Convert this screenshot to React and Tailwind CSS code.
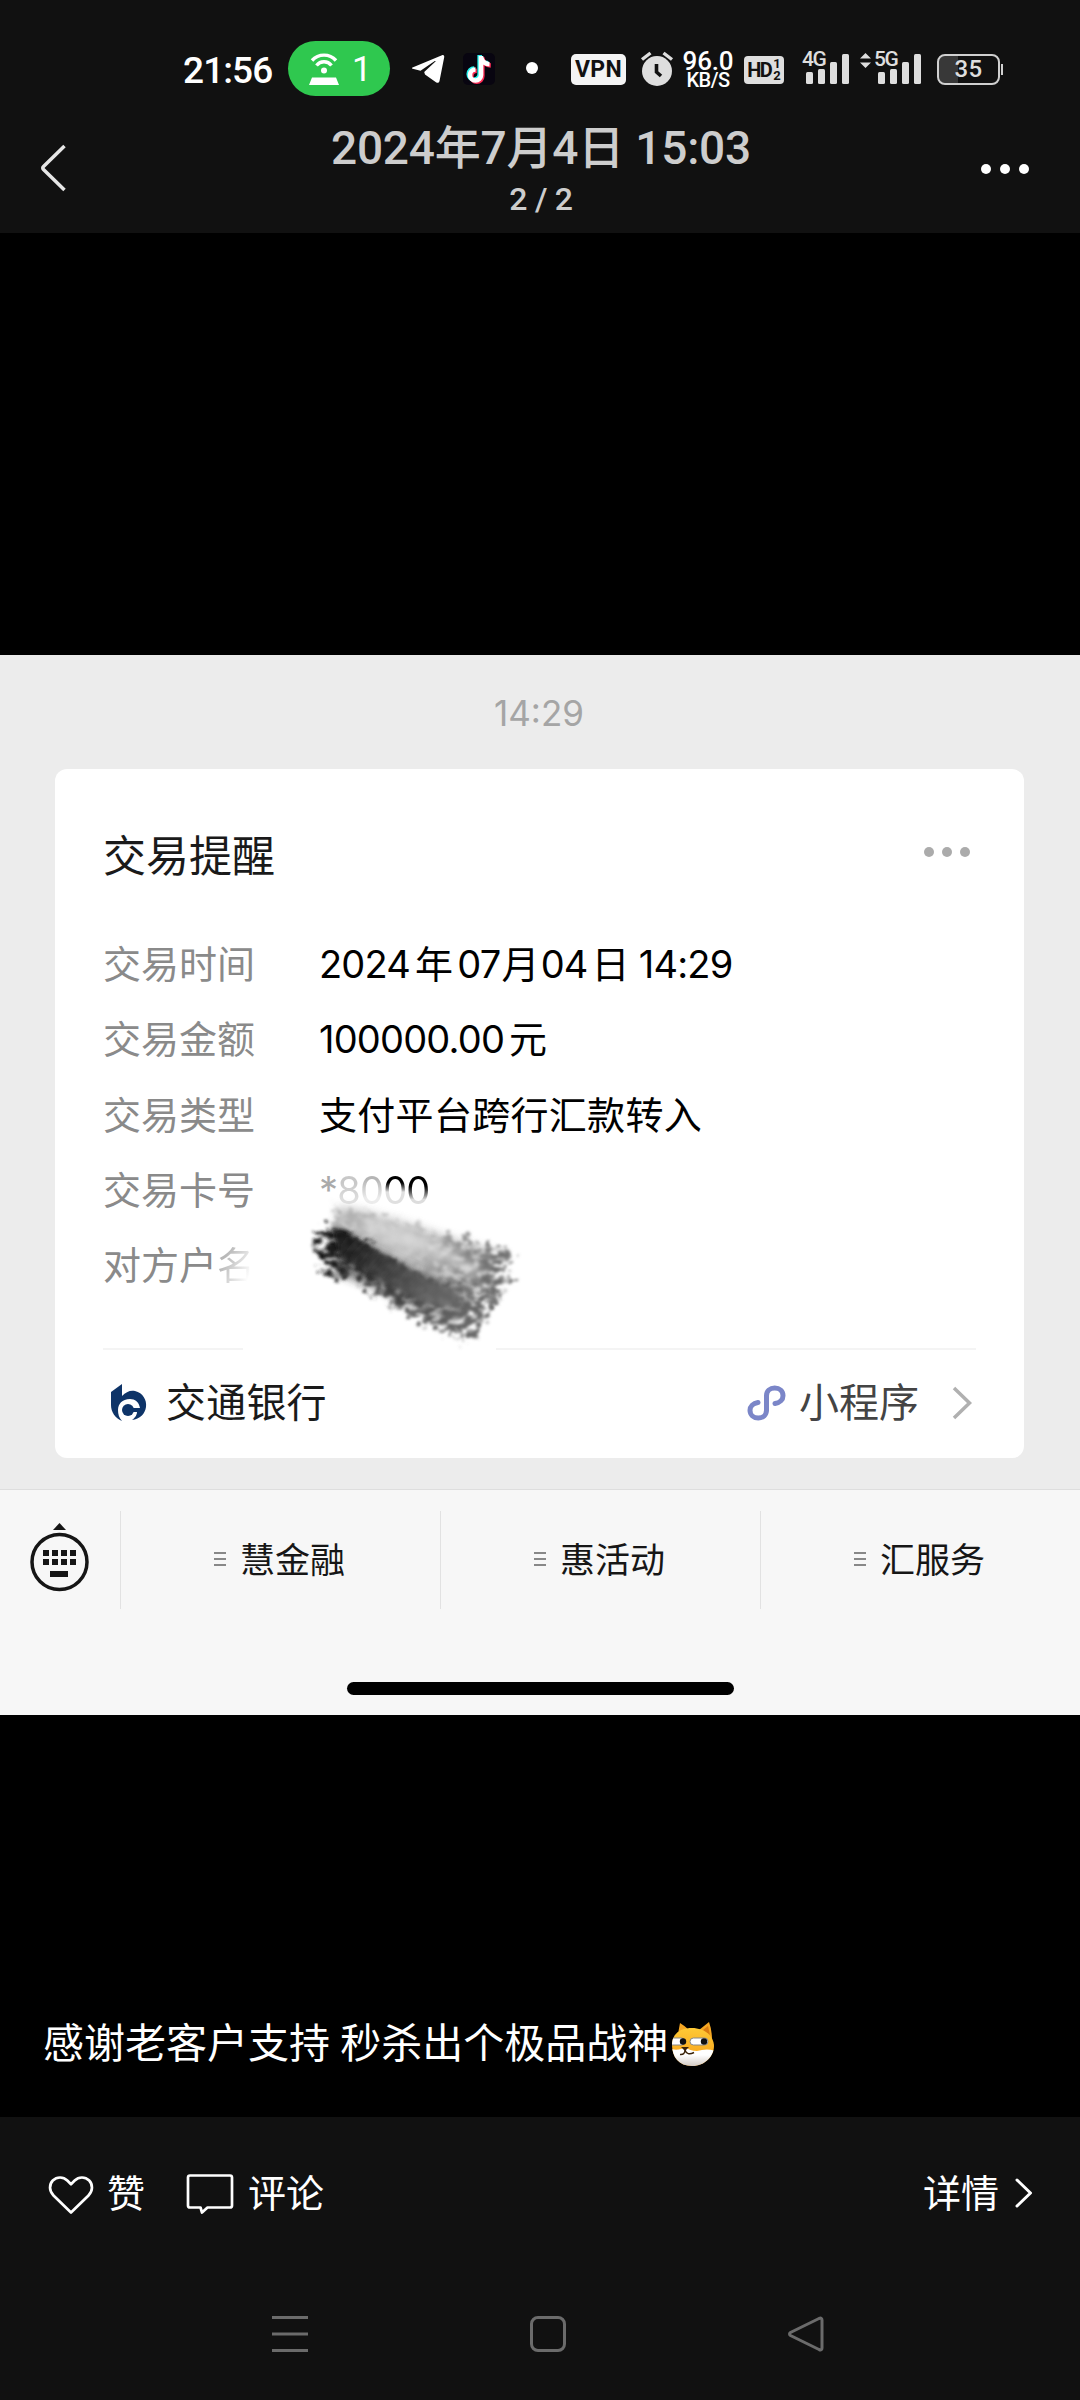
const rows = [
  { label: "交易时间", parts: ["2024", "年", "07", "月", "04", "日", "14:29"] },
  { label: "交易金额", parts: ["100000.00", "元"] },
];

const partGaps = ["", "ml-[5px]", "ml-[5px]", "ml-[1px]", "ml-[2px]", "ml-[4px]", "ml-[10px]"];

const menus = ["慧金融", "惠活动", "汇服务"];

const SignalBars = () => (
  <svg width="44" height="30" viewBox="0 0 44 30" fill="#dedede">
    <rect x="0" y="18" width="7" height="12" rx="1.5" />
    <rect x="12" y="15" width="7" height="15" rx="1.5" />
    <rect x="24" y="8" width="7" height="22" rx="1.5" />
    <rect x="36" y="0" width="7" height="30" rx="1.5" />
  </svg>
);

const StatusBar = () => (
  <div className="flex h-[136px] items-center pl-[183px] text-white">
    <span className="mt-[4px] w-[105px] text-[37px] leading-none font-medium tracking-[-0.9px]">21:56</span>

    {/* Hotspot pill */}
    <div className="mt-[1px] flex h-[55px] w-[102px] items-center rounded-full bg-[#2fc84f] pl-[20px]">
      <svg width="32" height="32" viewBox="0 0 32 32" fill="none" stroke="#fff" strokeWidth="3.4">
        <path d="M4 7.5C10.500 .3 21.500 .3 28 7.500" />
        <path d="M8.500 12.500C12.500 7.500 19.500 7.500 23.500 12.500" />
        <circle cx="16" cy="17.500" r="3" fill="#fff" stroke="none" />
        <path d="M4 24.500h24l3 7.500H1z" fill="#fff" stroke="none" />
      </svg>
      <span className="mt-[2px] ml-[12px] text-[35px] leading-none">1</span>
    </div>

    <svg className="ml-[21px] mt-[2px]" width="34" height="30" viewBox="0 0 34 30" fill="#fff">
      <path d="M1.500 13.500 31 1.200c1.500-.5 2.500.3 2.200 2L28.500 27c-.4 1.800-1.600 2.300-3.200 1.400L14 20.500l-.8-2.500L24.500 7.500c.4-.5 0-.8-.7-.4L9.500 16.800 1.700 14.700c-1-.3-1-.8-.2-1.200z" />
    </svg>

    <svg className="ml-[18px] mt-[1px]" width="32" height="32" viewBox="0 0 32 32" fill="none" strokeWidth="4.600">
      <rect width="32" height="32" rx="5" fill="#080510" />
      <path d="M18 3v19a5.500 5.500 0 1 1-5.500-5.500M18 4c1 4.500 4 7 8.500 7.200" stroke="#25f4ee" transform="translate(-1.300 -1)" />
      <path d="M18 3v19a5.500 5.500 0 1 1-5.500-5.500M18 4c1 4.500 4 7 8.500 7.200" stroke="#fe2c55" transform="translate(1.300 1.300)" />
      <path d="M18 3v19a5.500 5.500 0 1 1-5.500-5.500M18 4c1 4.500 4 7 8.500 7.200" stroke="#fff" />
    </svg>

    <div className="ml-[31px] size-3 rounded-full bg-white"></div>

    <div className="ml-[33px] mt-[2px] flex h-[31px] w-[55px] items-center justify-center rounded-[5px] bg-[#f4f4f4] text-[23px] leading-none font-bold tracking-[0.3px] text-[#111]">
      VPN
    </div>

    <svg className="ml-[14px] mt-[2px]" width="34" height="36" viewBox="0 0 34 36">
      <circle cx="17" cy="20" r="15" fill="#dedede" />
      <path d="M2 8.500 10.500 2M32 8.500 23.500 2" stroke="#dedede" strokeWidth="3.400" />
      <path d="M16.500 13v8l4.500 4" stroke="#111" strokeWidth="3.600" fill="none" />
    </svg>

    <div className="ml-[8px] mt-[2px] flex w-[52px] flex-col items-center font-medium">
      <span className="text-[26px] leading-[22px] tracking-[-0.2px]">96.0</span>
      <span className="text-[20px] leading-[17px] tracking-[-0.5px]">KB/S</span>
    </div>

    <div className="ml-[10px] mt-[4px] flex h-[28px] w-[40px] items-center justify-center rounded-[4px] bg-[#dedede] text-[#111]">
      <span className="text-[20px] leading-none font-bold tracking-[-1.500px]">HD</span>
      <span className="ml-[2px] flex flex-col text-[13px] leading-[12px] font-bold">
        <span>1</span>
        <span>2</span>
      </span>
    </div>

    <div className="relative ml-[22px] mt-[2px]">
      <SignalBars />
      <span className="absolute top-[-3px] left-[-4px] bg-[#111] text-[21px] leading-[17px] font-medium tracking-[-1.500px] text-[#dedede]">4G</span>
    </div>

    <div className="relative ml-[28px] mt-[2px]">
      <SignalBars />
      <svg className="absolute top-[-1px] left-[-18px]" width="11" height="15" viewBox="0 0 11 15" fill="#dedede">
        <path d="M5.500 0 11 5.500H0zM5.500 15 0 9.500h11z" />
      </svg>
      <span className="absolute top-[-3px] left-[-4px] bg-[#111] text-[21px] leading-[17px] font-medium tracking-[-1.500px] text-[#dedede]">5G</span>
    </div>

    <div className="ml-[15px] mt-[2px] flex items-center">
      <div className="flex h-[31px] w-[63px] items-center justify-center rounded-[8px] border-2 border-[#d0d0d0] bg-linear-to-r from-[#383838] from-32% to-[#111] to-32% bg-clip-padding text-[24px] leading-none font-medium tracking-[0.3px] text-[#dedede]">
        35
      </div>
      <div className="ml-[1px] h-[11px] w-[2px] bg-[#d0d0d0]"></div>
    </div>
  </div>
);

const Header = () => (
  <div className="flex h-[97px] items-start justify-between">
    <svg className="mt-[8px] ml-[38px]" width="30" height="48" viewBox="0 0 30 48" fill="none" stroke="#e6e6e6" strokeWidth="3.500">
      <path d="M26.500 2 5.500 22.500q-1.500 1.500 0 3L26.500 46" />
    </svg>
    <div className="flex flex-col items-center pl-[33px] text-[#cdcdcd]">
      <h1 className="mt-[-12px] text-[46px] leading-[48px] font-medium tracking-[-0.2px]">2024年7月4日 15:03</h1>
      <span className="mt-[10px] text-[32px] leading-[34px] font-medium tracking-[-0.3px]">2 / 2</span>
    </div>
    <div className="mt-[28px] mr-[51px] flex gap-[9px]">
      <i className="size-[10px] rounded-full bg-white"></i>
      <i className="size-[10px] rounded-full bg-white"></i>
      <i className="size-[10px] rounded-full bg-white"></i>
    </div>
  </div>
);

/* Brush mark over the counterparty name */
const Smudge = () => (
  <svg className="absolute top-[382px] left-[226px]" width="280" height="220" viewBox="0 0 840 660">
    <defs>
      <filter id="rough" x="-20%" y="-20%" width="140%" height="140%">
        <feTurbulence type="fractalNoise" baseFrequency="0.035 0.05" numOctaves="4" seed="7" result="n" />
        <feDisplacementMap in="SourceGraphic" in2="n" scale="90" xChannelSelector="R" yChannelSelector="G" result="d" />
        <feColorMatrix in="n" type="matrix" values="0 0 0 0 0  0 0 0 0 0  0 0 0 0 0  0 0 4 0 -1.300" result="m" />
        <feComposite in="d" in2="m" operator="in" />
        <feGaussianBlur stdDeviation="4" />
      </filter>
      <filter id="soft" x="-20%" y="-20%" width="140%" height="140%">
        <feGaussianBlur stdDeviation="12" />
      </filter>
      <filter id="edge" x="-20%" y="-20%" width="140%" height="140%">
        <feGaussianBlur stdDeviation="6" />
      </filter>
      <linearGradient id="light" x1="0" y1="0" x2="1" y2="0.300">
        <stop offset="0" stopColor="#a8a8a8" />
        <stop offset="0.500" stopColor="#c4c4c4" />
        <stop offset="1" stopColor="#6c6c6c" />
      </linearGradient>
      <linearGradient id="dark" x1="0" y1="0" x2="1" y2="0.500">
        <stop offset="0" stopColor="#0c0c0c" />
        <stop offset="0.600" stopColor="#444" />
        <stop offset="1" stopColor="#666" />
      </linearGradient>
    </defs>
    <path d="M170 165 240 175 380 215 500 255 640 300 640 370 600 430 520 440 160 250z" fill="#c4c4c4" opacity=".9" filter="url(#soft)" />
    <path d="M165 170 240 190 380 220 520 260 690 300 685 400 640 470 560 440 300 320 140 240z" fill="url(#light)" filter="url(#rough)" />
    <path d="M150 235 260 285 500 400 570 430 550 500 500 520 300 420 160 365z" fill="url(#dark)" opacity=".6" filter="url(#soft)" />
    <path d="M120 225 190 235 420 370 540 420 650 430 620 510 560 570 480 545 300 440 210 385 125 370 105 300z" fill="url(#dark)" filter="url(#rough)" />
    <path d="M150 230 190 240 300 305 420 375 530 425 540 470 440 460 320 400 180 320z" fill="url(#dark)" opacity=".85" filter="url(#edge)" />
    <path d="M250 220 450 290 590 365" stroke="#e4e4e4" strokeWidth="30" opacity=".6" fill="none" filter="url(#soft)" />
  </svg>
);

const NoticeCard = () => (
  <div className="relative mr-[56px] ml-[55px] mt-[38px] h-[689px] rounded-[12px] bg-white px-[48px]">
    <div className="flex items-center justify-between pt-[60px]">
      <h2 className="text-[43px] leading-[54px] text-[#1a1a1a]">交易提醒</h2>
      <div className="mt-[-8px] mr-[6px] flex gap-[8px]">
        <i className="size-[10px] rounded-full bg-[#ababab]"></i>
        <i className="size-[10px] rounded-full bg-[#ababab]"></i>
        <i className="size-[10px] rounded-full bg-[#ababab]"></i>
      </div>
    </div>

    <div className="mt-[44px] text-[38px] leading-[75.300px]">
      {rows.map((row) => (
        <div key={row.label} className="flex h-[75.300px] tracking-[-0.8px]">
          <span className="w-[216px] tracking-normal text-[#8a8a8a]">{row.label}</span>
          {row.parts.map((part, i) => (
            <span key={i} className={`text-black ${partGaps[i]}`}>{part}</span>
          ))}
        </div>
      ))}
      <div className="flex h-[75.300px]">
        <span className="w-[216px] text-[#8a8a8a]">交易类型</span>
        <span className="tracking-[0.300px] text-black">支付平台跨行汇款转入</span>
      </div>
      <div className="flex h-[75.300px] tracking-[-0.8px]">
        <span className="w-[216px] tracking-normal text-[#8a8a8a]">交易卡号</span>
        <span className="text-[#aaa]">*</span>
        <span className="bg-linear-to-b from-[#c8c8c8] from-40% to-[#e2e2e2] to-65% bg-clip-text text-transparent">8</span>
        <span className="bg-linear-to-b from-[#b5b5b5] from-35% to-[#ececec] to-60% bg-clip-text text-transparent">0</span>
        <span className="bg-linear-to-b from-black from-38% to-[#e0e0e0] to-52% bg-clip-text text-transparent">0</span>
        <span className="bg-linear-to-b from-black from-42% to-[#ddd] to-62% bg-clip-text text-transparent">0</span>
      </div>
      <div className="flex h-[75.300px] text-[#8a8a8a]">
        <span>对方户</span>
        <span className="bg-linear-to-br from-[#b8b8b8] from-30% to-white to-75% bg-clip-text text-transparent">名</span>
      </div>
    </div>

    <div className="mt-[45px] flex justify-between">
      <div className="h-[2px] w-[140px] bg-[#f4f4f4]"></div>
      <div className="h-[2px] w-[480px] bg-[#f4f4f4]"></div>
    </div>

    <div className="flex h-[105px] items-center">
      <svg className="ml-[7px]" width="38" height="40" viewBox="0 0 38 40" fill="#0e3468">
        <path d="M1 9 12 1V13C16 9 20 7 25 8 33 10 37 17 36 24 35 31 30 36 22 37 26 34 27 31 27 29H18V25H30C29 19 25 16 20 16 12 16 8 21 8 27 8 31 9 35 12 38 5 35 1 29 1 22z" />
        <circle cx="18" cy="27" r="6" />
      </svg>
      <span className="ml-[18px] text-[40px] leading-[50px] tracking-[0.200px] text-[#1a1a1a]">交通银行</span>
      <svg className="ml-auto" width="39" height="36" viewBox="0 0 39 36" fill="none" stroke="#7b86c8" strokeWidth="5" strokeLinecap="round">
        <path d="M28 18.500c5-.8 8-3.800 8-7.800 0-4.500-3.500-7.700-8.300-7.700-4.700 0-8.200 3.200-8.200 7.700v14.600c0 4.500-3.500 7.700-8.200 7.700S3 29.800 3 25.300c0-4 3-7 8-7.800" />
      </svg>
      <span className="ml-[13px] text-[40px] leading-[50px] text-[#444]">小程序</span>
      <svg className="mr-[3px] ml-[32px]" width="22" height="34" viewBox="0 0 22 34" fill="none" stroke="#b0b0b0" strokeWidth="3.500">
        <path d="M3 2 18.500 17 3 32" />
      </svg>
    </div>
    <Smudge />
  </div>
);

const MenuBar = () => (
  <div className="h-[226px] border-t border-[#dedede] bg-[#f7f7f7]">
    <div className="flex h-[140px] items-center">
      <svg className="ml-[28px] mb-[4px]" width="64" height="72" viewBox="0 0 63 72" fill="#161616">
        <path d="m31.500 1 6.500 7H25z" />
        <circle cx="31.500" cy="40" r="27.500" fill="none" stroke="#161616" strokeWidth="3.500" />
        <path d="M15 28h6v6h-6zM24 28h6v6h-6zM33 28h6v6h-6zM42 28h6v6h-6zM15 37h6v6h-6zM24 37h6v6h-6zM33 37h6v6h-6zM42 37h6v6h-6zM22 49h18v6H22z" />
      </svg>
      <div className="ml-[29px] flex flex-1">
        {menus.map((menu) => (
          <div key={menu} className="flex h-[98px] w-[320px] shrink-0 items-center border-l border-[#e2e2e2] pl-[93px]">
            <div className="mb-[2px] flex flex-col gap-[4px]">
              <i className="h-[2px] w-[12px] bg-[#888]"></i>
              <i className="h-[2px] w-[12px] bg-[#888]"></i>
              <i className="h-[2px] w-[12px] bg-[#888]"></i>
            </div>
            <span className="ml-[14px] text-[35px] leading-[44px] text-[#161616]">{menu}</span>
          </div>
        ))}
      </div>
    </div>
    <div className="mx-auto mt-[52px] h-[13px] w-[387px] rounded-full bg-black"></div>
  </div>
);

const DogeFace = () => (
  <svg className="mb-[2px] ml-[2px]" width="46" height="46" viewBox="0 0 46 46">
    <defs>
      <linearGradient id="fur" x1="0" y1="0" x2="0" y2="1">
        <stop offset="0" stopColor="#ffd23c" />
        <stop offset="1" stopColor="#f79a14" />
      </linearGradient>
      <linearGradient id="chin" x1="0" y1="0" x2="0" y2="1">
        <stop offset="0.400" stopColor="#fff" />
        <stop offset="1" stopColor="#cfc6c0" />
      </linearGradient>
      <clipPath id="face">
        <path d="M2 24C2 13 10 7 22 7s22 8 22 18-9 20-22 20S2 36 2 24z" />
      </clipPath>
    </defs>
    <path d="M8 13 10 2q5 3 9 7zM29 9 39 1q3 8 3 18z" fill="#f5a623" />
    <path d="m33 9 5-4 2 9z" fill="#d97b12" />
    <g clipPath="url(#face)">
      <path d="M0 0h46v46H0z" fill="url(#fur)" />
      <path d="M0 28q10 2 15-2 5 4 12 4 10-3 19 0v16H0z" fill="url(#chin)" />
      <rect x="-4" y="17" width="19" height="7" rx="3.500" fill="#fff" stroke="#888" />
    </g>
    <rect x="20" y="17" width="18" height="7" rx="3.500" fill="#fff" stroke="#888" />
    <circle cx="13" cy="20.500" r="3.200" fill="#111" />
    <circle cx="34" cy="20.500" r="3.200" fill="#111" />
    <path d="M11 26h8l-4 4z" fill="#3a2208" />
    <path d="M15 29q0 5-5 4.500M15 29q2 6 9 2.500" stroke="#3a2208" strokeWidth="1.400" fill="none" />
  </svg>
);

const ActionBar = () => (
  <div className="flex h-[154px] items-center text-[38px] leading-[48px] text-white">
    <svg className="ml-[48px] mt-[1px]" width="46" height="40" viewBox="0 0 46 40" fill="none" stroke="#fff" strokeWidth="2.700">
      <path d="M23 37.500 5.500 20.500C1 16 1 9.500 4.800 5.500c4-4 10.500-4 14.500 0L23 9.200l3.700-3.700c4-4 10.500-4 14.500 0 3.800 4 3.800 10.500-.7 15z" strokeLinejoin="round" />
    </svg>
    <span className="ml-[13px]">赞</span>
    <svg className="ml-[41px]" width="48" height="42" viewBox="0 0 48 42" fill="none" stroke="#fff" strokeWidth="2.700">
      <path d="M4 2.500h40q2 0 2 2v28q0 2-2 2H21.500L16 39.500l-1.500-5H4q-2 0-2-2v-28q0-2 2-2z" strokeLinejoin="round" />
    </svg>
    <span className="ml-[14px]">评论</span>
    <span className="ml-auto">详情</span>
    <svg className="mr-[46px] ml-[15px] mb-[2px]" width="20" height="32" viewBox="0 0 20 32" fill="none" stroke="#fff" strokeWidth="3" strokeLinecap="round" strokeLinejoin="round">
      <path d="M3 3 16.500 16 3 29" />
    </svg>
  </div>
);

const NavBar = () => (
  <div className="flex h-[129px] items-center pb-[3px] pl-[272px]">
    <svg width="36" height="38" viewBox="0 0 36 38" stroke="#6b6b6b" strokeWidth="3">
      <path d="M0 2.500h36M0 19h36M0 35.500h36" />
    </svg>
    <div className="ml-[222px] size-[36px] rounded-[8px] border-[3px] border-[#6b6b6b]"></div>
    <svg className="ml-[222px]" width="36" height="38" viewBox="0 0 36 38" fill="none" stroke="#6b6b6b" strokeWidth="3">
      <path d="M31 3.500 2.500 17.500q-2 1.500 0 3L31 34.500q3 1.300 3-1.500V5q0-2.800-3-1.500z" />
    </svg>
  </div>
);

const App = () => {
  return (
    <div className="h-[2400px] w-[1080px] overflow-hidden bg-black font-[Roboto,'Noto_Sans_CJK_SC',sans-serif]">
      <div className="h-[233px] bg-[#111]">
        <StatusBar />
        <Header />
      </div>

      {/* Photo */}
      <div className="mt-[422px] h-[1060px] bg-[#ececec] pt-[37px] font-[Inter,'Noto_Sans_CJK_SC',sans-serif]">
        <div className="h-[39px] pr-[2px] text-center text-[35px] leading-[43px] text-[#a5a5a5]">14:29</div>
        <NoticeCard />
        <div className="h-[31px]"></div>
        <MenuBar />
      </div>

      <div className="flex h-[402px] items-end pb-[48px] pl-[43px] text-white">
        <p className="text-[41px] leading-[50px]">感谢老客户支持 秒杀出个极品战神</p>
        <DogeFace />
      </div>

      <div className="h-[283px] bg-[#111]">
        <ActionBar />
        <NavBar />
      </div>
    </div>
  );
};

export default App;
